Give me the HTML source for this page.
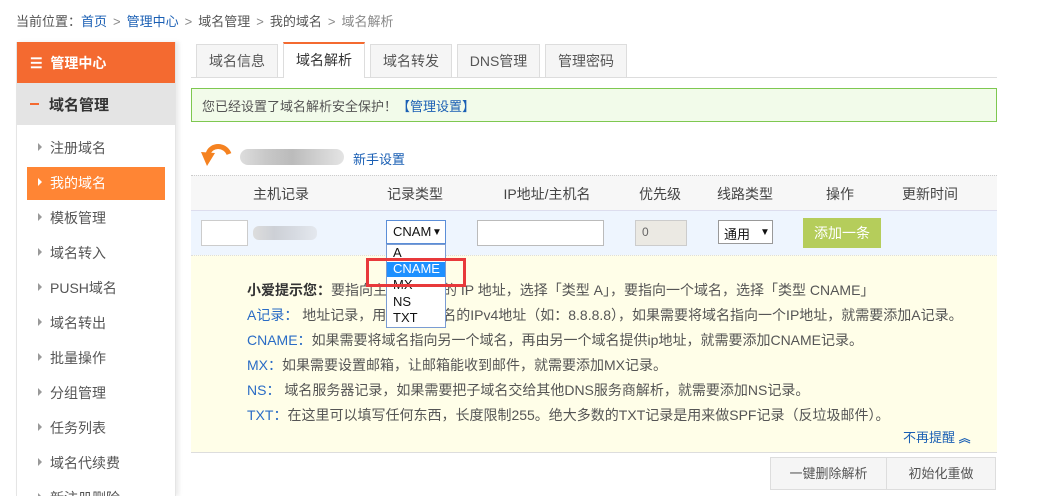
<!DOCTYPE html>
<html><head><meta charset="utf-8"><style>
*{margin:0;padding:0;box-sizing:border-box}
body{width:1038px;height:496px;overflow:hidden;background:#fff;font-family:"Liberation Sans","Noto Sans CJK SC",sans-serif;font-size:13px;color:#555;position:relative}
.a{position:absolute;white-space:nowrap}
.bl{color:#1a5fb4}
.sep{color:#888;margin:0 6px}
.side{position:absolute;left:16px;top:42px;width:160px;height:454px;border-left:1px solid #e5e5e5;border-right:1px solid #e5e5e5;box-shadow:3px 0 4px rgba(0,0,0,.08);overflow:hidden}
.item{position:absolute;left:33px;font-size:14px;color:#555}
.tri{position:absolute;left:-12px;top:5px;width:0;height:0;border-left:4px solid #999;border-top:4px solid transparent;border-bottom:4px solid transparent}
.tab{position:absolute;top:44px;height:33px;border:1px solid #ddd;border-bottom:none;background:#f5f5f5;font-size:14px;text-align:center;line-height:33px;color:#555}
.th{position:absolute;top:184px;font-size:14px;color:#444;transform:translateX(-50%)}
.hl{position:absolute;left:247px;font-size:14px;color:#555}
.hl span{color:#2a6cc5}
</style></head><body>
<div class="a" style="left:16px;top:11px;color:#555">当前位置：<span class="bl">首页</span><span class="sep">&gt;</span><span class="bl">管理中心</span><span class="sep">&gt;</span>域名管理<span class="sep">&gt;</span>我的域名<span class="sep">&gt;</span><span style="color:#888">域名解析</span></div>

<div class="side">
 <div style="position:absolute;left:-1px;top:0;width:160px;height:41px;background:#f46a30"></div>
 <div class="a" style="left:13px;top:11px;color:#fff;font-size:14px;font-weight:bold">☰&nbsp; 管理中心</div>
 <div style="position:absolute;left:-1px;top:41px;width:160px;height:42px;background:#e4e4e4"></div>
 <div style="position:absolute;left:13px;top:61px;width:9px;height:2px;background:#f46a30"></div>
 <div class="a" style="left:32px;top:52px;color:#333;font-size:15px;font-weight:bold">域名管理</div>
 <div style="position:absolute;left:10px;top:125px;width:138px;height:33px;background:#ff8534"></div>
 <div class="item" style="top:96px"><i class="tri"></i>注册域名</div>
 <div class="item" style="top:131px;color:#fff"><i class="tri" style="border-left-color:#fff"></i>我的域名</div>
 <div class="item" style="top:166px"><i class="tri"></i>模板管理</div>
 <div class="item" style="top:201px"><i class="tri"></i>域名转入</div>
 <div class="item" style="top:236px"><i class="tri"></i>PUSH域名</div>
 <div class="item" style="top:271px"><i class="tri"></i>域名转出</div>
 <div class="item" style="top:306px"><i class="tri"></i>批量操作</div>
 <div class="item" style="top:341px"><i class="tri"></i>分组管理</div>
 <div class="item" style="top:376px"><i class="tri"></i>任务列表</div>
 <div class="item" style="top:411px"><i class="tri"></i>域名代续费</div>
 <div class="item" style="top:446px"><i class="tri"></i>新注册删除</div>
</div>

<div style="position:absolute;left:191px;top:77px;width:806px;height:1px;background:#ddd"></div>
<div class="tab" style="left:196px;width:82px">域名信息</div>
<div class="tab" style="left:283px;width:82px;top:42px;height:36px;background:#fff;border-top:2px solid #f46a30;color:#333;line-height:32px">域名解析</div>
<div class="tab" style="left:370px;width:82px">域名转发</div>
<div class="tab" style="left:457px;width:83px">DNS管理</div>
<div class="tab" style="left:545px;width:82px">管理密码</div>

<div style="position:absolute;left:191px;top:88px;width:806px;height:34px;background:#f2fbea;border:1px solid #7ec850"></div>
<div class="a" style="left:202px;top:96px;font-size:13px">您已经设置了域名解析安全保护！<span class="bl">【管理设置】</span></div>

<svg class="a" style="left:199px;top:142px" width="36" height="28" viewBox="0 0 36 28"><path d="M30 12 C26 2 12 2 9 12" stroke="#f58220" stroke-width="5" fill="none"/><path d="M2 10 L16 11 L8 24 Z" fill="#f58220"/></svg>
<div style="position:absolute;left:240px;top:149px;width:104px;height:16px;border-radius:8px;background:linear-gradient(90deg,#ddd,#c8c8c8,#bbb,#d0d0d0,#e4e4e4)"></div>
<div class="a bl" style="left:353px;top:149px;font-size:13px">新手设置</div>

<div style="position:absolute;left:191px;top:175px;width:806px;height:36px;background:#f7f7f7;border-top:1px dotted #ccc;border-bottom:1px solid #dde"></div>
<div class="th" style="left:281px">主机记录</div>
<div class="th" style="left:415px">记录类型</div>
<div class="th" style="left:547px">IP地址/主机名</div>
<div class="th" style="left:660px">优先级</div>
<div class="th" style="left:745px">线路类型</div>
<div class="th" style="left:840px">操作</div>
<div class="th" style="left:930px">更新时间</div>

<div style="position:absolute;left:191px;top:211px;width:806px;height:44px;background:#eef5fe"></div>
<div style="position:absolute;left:201px;top:220px;width:47px;height:26px;background:#fff;border:1px solid #ccc"></div>
<div style="position:absolute;left:253px;top:226px;width:64px;height:14px;border-radius:6px;background:linear-gradient(90deg,#ddd,#cdd0d6,#d7dbe2,#e4e8ee)"></div>
<div style="position:absolute;left:386px;top:220px;width:60px;height:24px;background:#fff;border:1px solid #5b8ed8"></div>
<div class="a" style="left:393px;top:224px;font-size:13px;color:#111">CNAM</div>
<div class="a" style="left:432px;top:227px;font-size:10px;color:#111">▼</div>
<div style="position:absolute;left:477px;top:220px;width:127px;height:26px;background:#fff;border:1px solid #bbb"></div>
<div style="position:absolute;left:635px;top:220px;width:52px;height:26px;background:#ebe9e3;border:1px solid #ccc"></div>
<div class="a" style="left:642px;top:225px;font-size:12px;color:#666">0</div>
<div style="position:absolute;left:718px;top:220px;width:55px;height:24px;background:#fff;border:1px solid #999"></div>
<div class="a" style="left:724px;top:224px;font-size:13px;color:#111">通用</div>
<div class="a" style="left:760px;top:227px;font-size:10px;color:#111">▼</div>
<div style="position:absolute;left:803px;top:218px;width:78px;height:30px;background:#b5cd5b;color:#fff;font-size:14px;text-align:center;line-height:30px">添加一条</div>

<div style="position:absolute;left:191px;top:255px;width:806px;height:198px;background:#fffee8;border-top:1px dotted #ddd;border-bottom:1px solid #ddd"></div>
<div class="hl" style="top:280px"><b style="color:#333">小爱提示您：</b>要指向主机服务商的 IP 地址，选择「类型 A」，要指向一个域名，选择「类型 CNAME」</div>
<div class="hl" style="top:305px"><span>A记录：</span> 地址记录，用来指定域名的IPv4地址（如：8.8.8.8），如果需要将域名指向一个IP地址，就需要添加A记录。</div>
<div class="hl" style="top:330px"><span>CNAME：</span>如果需要将域名指向另一个域名，再由另一个域名提供ip地址，就需要添加CNAME记录。</div>
<div class="hl" style="top:355px"><span>MX：</span>如果需要设置邮箱，让邮箱能收到邮件，就需要添加MX记录。</div>
<div class="hl" style="top:380px"><span>NS：</span> 域名服务器记录，如果需要把子域名交给其他DNS服务商解析，就需要添加NS记录。</div>
<div class="hl" style="top:405px"><span>TXT：</span>在这里可以填写任何东西，长度限制255。绝大多数的TXT记录是用来做SPF记录（反垃圾邮件）。</div>
<div class="a bl" style="left:903px;top:427px;font-size:13px">不再提醒 <b style="font-size:12px">︽</b></div>

<div style="position:absolute;left:386px;top:244px;width:60px;height:84px;background:#fff;border:1px solid #7a9cd3"></div>
<div style="position:absolute;left:387px;top:262px;width:58px;height:15px;background:#1e90ff"></div>
<div class="a" style="left:393px;top:245px;font-size:13px;color:#111;line-height:16px">A</div>
<div class="a" style="left:393px;top:261px;font-size:13px;color:#fff;line-height:16px">CNAME</div>
<div class="a" style="left:393px;top:277px;font-size:13px;color:#111;line-height:16px">MX</div>
<div class="a" style="left:393px;top:294px;font-size:13px;color:#111;line-height:16px">NS</div>
<div class="a" style="left:393px;top:310px;font-size:13px;color:#111;line-height:16px">TXT</div>
<div style="position:absolute;left:366px;top:258px;width:100px;height:29px;border:3px solid #e8393b"></div>

<div style="position:absolute;left:770px;top:457px;width:117px;height:33px;background:#f5f5f5;border:1px solid #ddd;text-align:center;line-height:31px;font-size:13px">一键删除解析</div>
<div style="position:absolute;left:886px;top:457px;width:110px;height:33px;background:#f5f5f5;border:1px solid #ddd;text-align:center;line-height:31px;font-size:13px">初始化重做</div>
</body></html>
